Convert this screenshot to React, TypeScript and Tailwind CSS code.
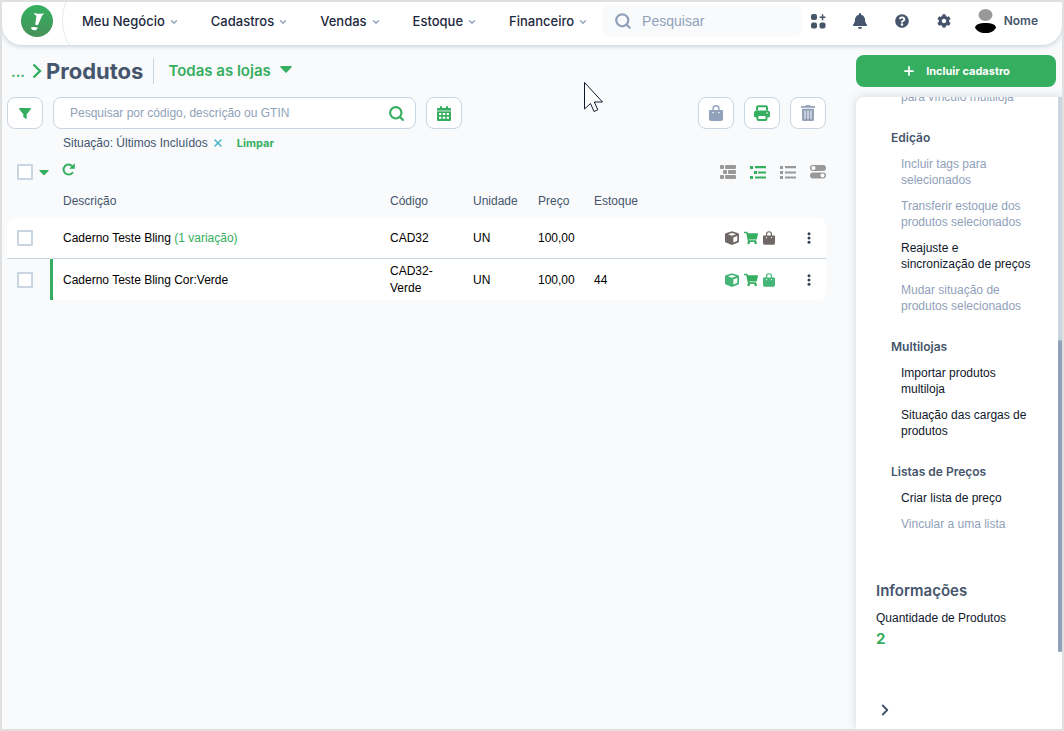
import type { ReactNode } from "react";
import {
  FaBell,
  FaCaretDown,
  FaCog,
  FaQuestionCircle,
  FaShoppingCart,
} from "react-icons/fa";
import { ChevronDown, ChevronRight, Plus, Search, X } from "lucide-react";

const menus = ["Meu Negócio", "Cadastros", "Vendas", "Estoque", "Financeiro"];

interface Product {
  name: string;
  variation?: string;
  code: string;
  unit: string;
  price: string;
  stock?: string;
  child?: boolean;
}

const products: Product[] = [
  {
    name: "Caderno Teste Bling",
    variation: "(1 variação)",
    code: "CAD32",
    unit: "UN",
    price: "100,00",
  },
  {
    name: "Caderno Teste Bling Cor:Verde",
    code: "CAD32-Verde",
    unit: "UN",
    price: "100,00",
    stock: "44",
    child: true,
  },
];

const sections = [
  {
    title: "Edição",
    items: [
      { label: "Incluir tags para selecionados" },
      { label: "Transferir estoque dos produtos selecionados" },
      { label: "Reajuste e sincronização de preços", enabled: true },
      { label: "Mudar situação de produtos selecionados" },
    ],
  },
  {
    title: "Multilojas",
    items: [
      { label: "Importar produtos multiloja", enabled: true },
      { label: "Situação das cargas de produtos", enabled: true },
    ],
  },
  {
    title: "Listas de Preços",
    items: [
      { label: "Criar lista de preço", enabled: true },
      { label: "Vincular a uma lista" },
    ],
  },
];

const BagIcon = ({ className }: { className: string }) => (
  <svg viewBox="0 0 14 16" className={className} fill="currentColor">
    <path
      fillRule="evenodd"
      d="M3.4 5V3.600a3.600 3.600 0 0 1 7.200 0V5H13a1 1 0 0 1 1 1v7.700A2.300 2.300 0 0 1 11.700 16H2.300A2.300 2.300 0 0 1 0 13.700V6a1 1 0 0 1 1-1zM4.800 5h4.400V3.600a2.200 2.200 0 0 0-4.400 0zM4.100 6.700a.8.8 0 1 0 0 1.600.8.8 0 0 0 0-1.600zm5.800 0a.8.8 0 1 0 0 1.600.8.8 0 0 0 0-1.600z"
    />
  </svg>
);

const CubeIcon = () => (
  <svg viewBox="0 0 14 14" className="h-[14px] w-[14px]" fill="currentColor">
    <path
      fillRule="evenodd"
      d="M7 .2L13.300 2.200Q14 2.500 14 3.300V10.300Q14 11 13.300 11.400L7 14 .7 11.400Q0 11 0 10.300V3.300Q0 2.500.7 2.200zM7 1.900L3 3.300 7 4.700 11 3.300zM8.300 6.600V11.500L12.300 9.800V5.100z"
    />
  </svg>
);

const FilterIcon = () => (
  <svg viewBox="0 0 12 11" className="h-[11px] w-3" fill="#35ae60">
    <path d="M.6 0H11.400Q12.200.3 11.800 1.200L7.700 6.200V10.500Q7.500 11.200 6.800 10.800L4.300 9V6.200L.2 1.200Q-.2.3.6 0z" />
  </svg>
);

const PrintIcon = () => (
  <svg viewBox="0 0 16 16" className="h-4 w-4" fill="none">
    <path d="M3 5.500V2.500a1.300 1.300 0 0 1 1.300-1.300h7.400A1.300 1.300 0 0 1 13 2.500v3" stroke="#35ae60" strokeWidth="2" />
    <path
      d="M2.500 5.500h11A2.500 2.500 0 0 1 16 8v3.300a1 1 0 0 1-1 1H1a1 1 0 0 1-1-1V8a2.500 2.500 0 0 1 2.500-2.500z"
      fill="#35ae60"
    />
    <rect x="3.500" y="10" width="9" height="5" rx="1" fill="#fff" stroke="#35ae60" strokeWidth="2" />
    <circle cx="13" cy="8" r=".8" fill="#fff" />
  </svg>
);

const CalendarIcon = () => (
  <svg viewBox="0 0 14 15" className="h-[15px] w-[14px]" fill="#35ae60">
    <path d="M1 2h2V1a1 1 0 0 1 2 0v1h4V1a1 1 0 0 1 2 0v1h2a1 1 0 0 1 1 1v1H0V3a1 1 0 0 1 1-1z" />
    <path opacity=".6" d="M0 4h14v1.500H0z" />
    <path
      fillRule="evenodd"
      d="M0 5.500h14V14a1 1 0 0 1-1 1H1a1 1 0 0 1-1-1zM2 7v2h2.300V7zm3.800 0v2h2.400V7zm3.900 0v2H12V7zM2 10.700v2h2.300v-2zm3.800 0v2h2.400v-2zm3.900 0v2H12v-2z"
    />
  </svg>
);

const TrashIcon = () => (
  <svg viewBox="0 0 14 16" className="h-4 w-[14px]" fill="#94a3b8">
    <path d="M0 1h4.500l.7-1h3.600l.7 1H14v1.800H0z" />
    <path
      fillRule="evenodd"
      d="M1 3.800h12v10.700a1.500 1.500 0 0 1-1.500 1.500h-9A1.500 1.500 0 0 1 1 14.500zm2.600 2v8h.9v-8zm2.900 0v8h1v-8zm3 0v8h.9v-8z"
    />
  </svg>
);

const ReloadIcon = () => (
  <svg viewBox="0 0 13 13" className="h-[13px] w-[13px]" fill="none">
    <path
      d="M10.400 9.800A5 5 0 1 1 10 2.900"
      stroke="#35ae60"
      strokeWidth="2"
      strokeLinecap="round"
    />
    <path d="M12.800.3V5.700H7.200z" fill="#35ae60" />
  </svg>
);

const AppsIcon = () => (
  <svg viewBox="0 0 15 15" className="h-[15px] w-[15px]" fill="#475569">
    <rect width="6" height="6" rx="2" />
    <rect y="8.500" width="6" height="6" rx="2" />
    <rect x="8.500" y="8.500" width="6" height="6" rx="2" />
    <path d="M10.800.3h1.500v2.200h2.200V4h-2.200v2.200h-1.500V4H8.600V2.500h2.200z" />
  </svg>
);

const Logo = () => (
  <svg viewBox="0 0 32 32" className="h-8 w-8">
    <defs>
      <linearGradient id="logo" x1="0" y1="0" x2="0" y2="1">
        <stop offset="0" stopColor="#35b060" />
        <stop offset="1" stopColor="#47925a" />
      </linearGradient>
    </defs>
    <circle cx="16" cy="16" r="16" fill="url(#logo)" />
    <path
      d="M13 8C16 9 19 9 22.700 8.200C22.400 9.500 21.800 10 21.200 10.400L17.300 19.200C16.600 20.300 14.800 20.300 14.300 19.400L15.400 10.700C14 10.300 13.200 9.300 13 8z"
      fill="#fff"
    />
    <path
      d="M10 22.500C12 21.300 14 22.200 16.700 22.400C16.300 24.400 15 25.300 13.300 25.200C11.500 25.200 10.200 24.300 10 22.500z"
      fill="#fff"
    />
  </svg>
);

const Header = () => {
  return (
    <header className="relative z-10 flex h-[43px] shrink-0 items-start overflow-hidden rounded-b-[20px] bg-white pt-[3px] pr-6 pl-[19px] shadow-[0_1px_5px_rgba(71,85,105,0.3)]">
      <a href="#" aria-label="Início">
        <Logo />
      </a>
      <svg viewBox="0 0 10 43" className="-mt-[3px] ml-2 h-[43px] w-[10px] shrink-0" fill="none">
        <path d="M5 0C0 13 0 28 8 43" stroke="#e2e8f0" />
      </svg>
      <nav className="ml-[11px] flex h-[34px] items-center gap-8 font-[Inter,sans-serif] text-[13px] font-medium text-slate-800">
        {menus.map((menu) => (
          <button key={menu} className="flex items-center gap-1 whitespace-nowrap">
            {menu}
            <ChevronDown className="h-[10px] w-[10px] text-slate-400" strokeWidth={3} />
          </button>
        ))}
      </nav>
      <label className="ml-[14px] flex h-8 w-[200px] items-center gap-[10px] rounded-lg bg-slate-50 px-3">
        <Search className="h-[18px] w-[18px] shrink-0 text-slate-400" strokeWidth={3} />
        <input
          aria-label="Pesquisar"
          placeholder="Pesquisar"
          className="w-full min-w-0 text-[14px] outline-none placeholder:text-slate-400"
        />
      </label>
      <div className="ml-auto flex h-8 items-center gap-[26px] text-[16px] text-slate-600">
        <button aria-label="Aplicativos">
          <AppsIcon />
        </button>
        <button aria-label="Notificações">
          <FaBell />
        </button>
        <button aria-label="Ajuda">
          <FaQuestionCircle className="h-[14px] w-4" />
        </button>
        <button aria-label="Configurações">
          <FaCog className="h-[14px] w-4" />
        </button>
        <button className="-ml-[3px] flex items-center gap-2 font-[Inter,sans-serif] text-[12px] font-semibold">
          <svg viewBox="0 0 21 24" className="h-6 w-[21px]">
            <ellipse cx="10.500" cy="6" rx="7" ry="6" fill="#999" />
            <path d="M0 18.500C1 15 5 14 10.500 14S20 15 21 18.500C19.500 22 16 24 10.500 24S1.500 22 0 18.500z" />
          </svg>
          Nome
        </button>
      </div>
    </header>
  );
};

const SquareButton = ({ label, children }: { label: string; children: ReactNode }) => (
  <button
    aria-label={label}
    className="flex h-8 w-9 shrink-0 items-center justify-center rounded-lg border border-slate-300 bg-white text-[#35ae60]"
  >
    {children}
  </button>
);

const Checkbox = ({ label }: { label: string }) => (
  <input
    type="checkbox"
    aria-label={label}
    className="block h-4 w-4 appearance-none rounded-[1px] border-2 border-slate-300 bg-white checked:bg-[#35ae60]"
  />
);

const ViewButtons = () => (
  <div className="flex gap-[14px]">
    <button aria-label="Visão agrupada">
      <svg viewBox="0 0 16 14" className="h-[14px] w-4" fill="#999">
        <rect width="4" height="4" rx="1" />
        <rect x="5" width="11" height="4" rx="1" />
        <rect x="3" y="5" width="4" height="4" rx="1" />
        <rect x="8" y="5" width="8" height="4" rx="1" />
        <rect y="10" width="4" height="4" rx="1" />
        <rect x="5" y="10" width="11" height="4" rx="1" />
      </svg>
    </button>
    <button aria-label="Visão com variações">
      <svg viewBox="0 0 16 14" className="h-[14px] w-4" fill="#35ae60">
        <path d="M0 1h3v3H0zM5 1h11v2.300H5zM4 6h3v3H4zM8 6.400h8v2.200H8zM0 11h3v3H0zM5 11.400h11v2.200H5z" />
      </svg>
    </button>
    <button aria-label="Lista">
      <svg viewBox="0 0 16 14" className="h-[14px] w-4" fill="#999">
        <path d="M0 1h3v3H0zM5 1h11v2.300H5zM0 6h3v3H0zM5 6.400h11v2.200H5zM0 11h3v3H0zM5 11.400h11v2.200H5z" />
      </svg>
    </button>
    <button aria-label="Opções de exibição">
      <svg viewBox="0 0 16 14" className="h-[14px] w-4">
        <rect width="16" height="6" rx="3" fill="#999" />
        <rect y="7.500" width="16" height="6" rx="3" fill="#999" />
        <circle cx="3.500" cy="3" r="2" fill="#fff" />
        <circle cx="12.500" cy="10.500" r="2" fill="#fff" />
      </svg>
    </button>
  </div>
);

const ProductTable = () => {
  return (
    <table className="mt-[2px] w-full table-fixed border-separate border-spacing-0 text-left text-[12px]">
      <colgroup>
        <col className="w-[43px]" />
        <col />
        <col className="w-[83px]" />
        <col className="w-[65px]" />
        <col className="w-[56px]" />
        <col className="w-[131px]" />
        <col className="w-[78px]" />
        <col className="w-[33px]" />
      </colgroup>
      <thead>
        <tr className="h-[34px] text-slate-600 [&>th]:px-[10px] [&>th]:font-normal">
          <th></th>
          <th className="border-l-[3px] border-transparent">Descrição</th>
          <th>Código</th>
          <th>Unidade</th>
          <th>Preço</th>
          <th>Estoque</th>
          <th></th>
          <th></th>
        </tr>
      </thead>
      <tbody className="text-black">
        {products.map((product) => (
          <tr
            key={product.code}
            className={
              product.child
                ? "h-[41px] [&>td]:bg-white [&>td]:px-[10px] [&>td:first-child]:bg-slate-50"
                : "h-[41px] [&>td]:border-b [&>td]:border-b-slate-300 [&>td]:bg-white [&>td]:px-[10px]"
            }
          >
            <td className={product.child ? "" : "rounded-tl-lg"}>
              <Checkbox label={product.name} />
            </td>
            <td
              className={
                product.child
                  ? "border-l-[3px] border-l-[#35ae60]"
                  : "border-l-[3px] border-l-white"
              }
            >
              {product.name}{" "}
              {product.variation && <span className="text-[#35ae60]">{product.variation}</span>}
            </td>
            <td className="leading-[17px]">{product.code}</td>
            <td>{product.unit}</td>
            <td>{product.price}</td>
            <td>{product.stock}</td>
            <td>
              <div
                className={
                  product.child
                    ? "flex items-center gap-[5px] text-[#45b678]"
                    : "flex items-center gap-[5px] text-[#706866]"
                }
              >
                <CubeIcon />
                <FaShoppingCart className="h-[14px] w-[14px] text-[#35ae60]" />
                <BagIcon className="h-[14px] w-3" />
              </div>
            </td>
            <td className={product.child ? "rounded-br-lg" : "rounded-tr-lg"}>
              <button aria-label="Mais ações" className="flex w-3 justify-center">
                <svg viewBox="0 0 4 12" className="h-3 w-1" fill="#334155">
                  <circle cx="2" cy="1.800" r="1.500" />
                  <circle cx="2" cy="6" r="1.500" />
                  <circle cx="2" cy="10.200" r="1.500" />
                </svg>
              </button>
            </td>
          </tr>
        ))}
      </tbody>
    </table>
  );
};

const Sidebar = () => {
  return (
    <aside className="flex w-[206px] shrink-0 flex-col pt-[10px]">
      <button className="mr-[6px] flex h-8 shrink-0 items-center justify-center gap-[10px] rounded-lg bg-[#35ae60] font-[Inter,sans-serif] text-[11px] font-bold text-white">
        <Plus className="h-[14px] w-[14px]" strokeWidth={3} />
        Incluir cadastro
      </button>
      <div className="mt-[10px] flex min-h-0 flex-1 overflow-hidden rounded-tl-lg bg-white shadow-[0_0_10px_rgba(71,85,105,0.2)]">
        <div className="flex min-w-0 flex-1 flex-col pr-[26px] pl-5 text-[12px] leading-4 text-slate-900">
          <div className="-mt-2 pl-[25px] text-slate-400">para vínculo multiloja</div>
          {sections.map((section) => (
            <section key={section.title} className="mt-[25px] pl-[15px]">
              <h3 className="font-[Inter,sans-serif] font-semibold text-slate-600">
                {section.title}
              </h3>
              <ul className="pl-[10px]">
                {section.items.map((item) => (
                  <li key={item.label} className="mt-[10px]">
                    <a href="#" className={item.enabled ? "block" : "block text-slate-400"}>
                      {item.label}
                    </a>
                  </li>
                ))}
              </ul>
            </section>
          ))}
          <h2 className="mt-[49px] font-[Inter,sans-serif] text-[15px] leading-5 font-semibold text-slate-600">
            Informações
          </h2>
          <p className="mt-[9px] whitespace-nowrap">Quantidade de Produtos</p>
          <strong className="mt-[5px] font-[Inter,sans-serif] text-[15px] font-bold text-[#35ae60]">
            2
          </strong>
          <button aria-label="Recolher painel" className="mt-auto mb-[10px] w-4 text-slate-600">
            <ChevronRight className="h-[18px] w-[18px]" strokeWidth={2.5} />
          </button>
        </div>
        {/* scroll track */}
        <div className="flex w-1 flex-col bg-slate-300">
          <div className="flex-[243]"></div>
          <div className="flex-[312] rounded-sm bg-slate-400"></div>
          <div className="flex-[77] bg-white"></div>
        </div>
      </div>
    </aside>
  );
};

const App = () => {
  return (
    <div className="relative flex h-screen flex-col overflow-hidden border-2 border-[#e0e0e0] bg-slate-50 font-['Liberation_Sans',Arial,sans-serif]">
      <Header />
      <div className="flex min-h-0 flex-1">
        <main className="min-w-0 flex-1 pr-[30px] pl-[5px]">
          <div className="flex h-[52px] items-center font-[Inter,sans-serif] text-[#35ae60]">
            <a href="#" className="ml-1 text-[14px] font-bold">
              ...
            </a>
            <svg viewBox="0 0 10 16" className="ml-[7px] h-4 w-[10px]" fill="none">
              <path d="M1.500 1.500L8 8l-6.500 6.500" stroke="#35ae60" strokeWidth="2.400" />
            </svg>
            <h1 className="ml-1 text-[22px] font-bold text-slate-600">Produtos</h1>
            <div className="ml-[10px] h-[26px] w-px bg-slate-300"></div>
            <button className="ml-[14px] flex items-center gap-[9px] text-[15px] font-semibold">
              Todas as lojas
              <svg viewBox="0 0 12 7" className="mb-1 h-[7px] w-3" fill="#35ae60">
                <path d="M1 0h10a.8.8 0 0 1 .6 1.300L6.600 6.600a.9.9 0 0 1-1.200 0L.4 1.300A.8.8 0 0 1 1 0z" />
              </svg>
            </button>
          </div>

          <div className="flex items-center gap-[10px]">
            <SquareButton label="Filtrar">
              <FilterIcon />
            </SquareButton>
            <div className="flex h-8 w-[363px] items-center rounded-lg border border-slate-300 bg-white pr-[10px] pl-4">
              <input
                aria-label="Pesquisar produtos"
                placeholder="Pesquisar por código, descrição ou GTIN"
                className="min-w-0 flex-1 text-[12px] outline-none placeholder:text-slate-400"
              />
              <button aria-label="Pesquisar" className="text-[#35ae60]">
                <Search className="h-[17px] w-[17px]" strokeWidth={3} />
              </button>
            </div>
            <SquareButton label="Período">
              <CalendarIcon />
            </SquareButton>
            <div className="ml-auto flex gap-[10px]">
              <SquareButton label="Lojas virtuais">
                <BagIcon className="h-4 w-[14px] text-slate-400" />
              </SquareButton>
              <SquareButton label="Imprimir">
                <PrintIcon />
              </SquareButton>
              <SquareButton label="Excluir">
                <TrashIcon />
              </SquareButton>
            </div>
          </div>

          <div className="mt-[6px] flex h-4 items-center pl-14 text-[12px] text-slate-600">
            Situação: Últimos Incluídos
            <button aria-label="Remover filtro" className="ml-1 text-[#45b5c0]">
              <X className="h-3 w-3" strokeWidth={3} />
            </button>
            <button className="ml-[13px] font-[Inter,sans-serif] text-[11px] font-bold text-[#35ae60]">
              Limpar
            </button>
          </div>

          <div className="mt-[10px] flex h-[21px] items-center pl-[10px]">
            <Checkbox label="Selecionar todos" />
            <button aria-label="Opções de seleção" className="ml-[5px] text-[#35ae60]">
              <FaCaretDown className="h-4 w-3" />
            </button>
            <button aria-label="Atualizar" className="ml-3 pb-1">
              <ReloadIcon />
            </button>
            <div className="ml-auto">
              <ViewButtons />
            </div>
          </div>

          <ProductTable />
        </main>
        <Sidebar />
      </div>

      {/* mouse pointer over the page */}
      <svg viewBox="0 0 20 31" className="absolute top-20 left-[582px] z-20 h-[31px] w-5">
        <path
          d="M.5.5V27l6-5.500 3.500 8 3.800-1.700L10.300 20H18.500z"
          fill="#fff"
          stroke="#0f172a"
        />
      </svg>
    </div>
  );
};

export default App;
